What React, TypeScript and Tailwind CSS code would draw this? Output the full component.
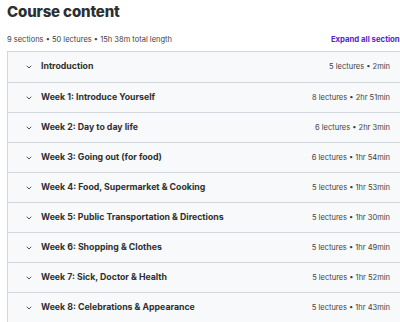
import { ChevronDown } from 'lucide-react';

const sections = [
  { title: 'Introduction', meta: '5 lectures • 2min' },
  { title: 'Week 1: Introduce Yourself', meta: '8 lectures • 2hr 51min' },
  { title: 'Week 2: Day to day life', meta: '6 lectures • 2hr 3min' },
  { title: 'Week 3: Going out (for food)', meta: '6 lectures • 1hr 54min' },
  { title: 'Week 4: Food, Supermarket & Cooking', meta: '5 lectures • 1hr 53min' },
  { title: 'Week 5: Public Transportation & Directions', meta: '5 lectures • 1hr 30min' },
  { title: 'Week 6: Shopping & Clothes', meta: '5 lectures • 1hr 49min' },
  { title: 'Week 7: Sick, Doctor & Health', meta: '5 lectures • 1hr 52min' },
  { title: 'Week 8: Celebrations & Appearance', meta: '5 lectures • 1hr 43min' },
];

export default function App() {
  return (
    <div className="w-[400px] h-[322px] overflow-hidden bg-white font-['Inter',sans-serif] text-[#2d2f31]">
      <div className="w-[410px] pl-[7px]">
        {/* Header */}
        <h2 className="text-[15px] font-extrabold leading-[20px] pt-[2px] tracking-[-0.01em]">Course content</h2>
        <div className="flex items-center justify-between mt-[12px] h-[12px] pr-[6px]">
          <span className="text-[7.5px] text-[#3e4143]">9 sections • 50 lectures • 15h 38m total length</span>
          <span className="text-[7.75px] font-bold text-[#5624d0]">Expand all sections</span>
        </div>

        {/* Sections */}
        <div className="mt-[5px] border border-[#d1d7dc] border-r-0">
          {sections.map((s, i) => (
            <div
              key={s.title}
              className={`flex items-center justify-between h-[30px] bg-[#f7f9fa] pl-[17px] pr-[20px] ${
                i > 0 ? 'border-t border-[#d1d7dc]' : ''
              }`}
            >
              <div className="flex items-center gap-[8px]">
                <ChevronDown className="w-[8px] h-[8px] text-[#2d2f31]" strokeWidth={2.5} />
                <span className="text-[8.75px] font-bold">{s.title}</span>
              </div>
              <span className="text-[7.5px] text-[#3e4143]">{s.meta}</span>
            </div>
          ))}
        </div>
      </div>
    </div>
  );
}
